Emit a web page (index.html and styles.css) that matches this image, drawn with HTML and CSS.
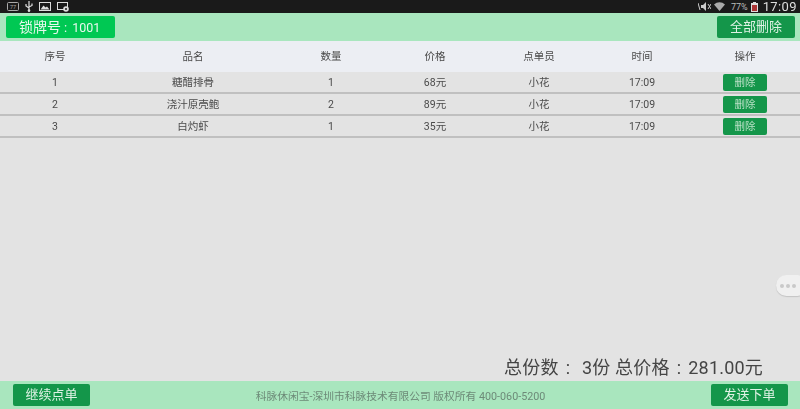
FILE: index.html
```html
<!DOCTYPE html>
<html lang="zh">
<head>
<meta charset="utf-8">
<title>锁牌号</title>
<link rel="stylesheet" href="styles.css">
</head>
<body>
<div class="app">
  <div class="status">
    <div class="status-left">
      <svg class="ic" width="12" height="9" viewBox="0 0 12 9"><rect x="0.5" y="0.5" width="11" height="8" rx="1" fill="none" stroke="#aaa"/><text x="6" y="7" font-size="5.5" fill="#aaa" text-anchor="middle" font-family="Roboto">77</text></svg>
      <svg class="ic" width="8" height="11" viewBox="0 0 8 11"><path d="M4 0v11M1 3v2l3 2M7 2.500v2l-3 1.500" fill="none" stroke="#ddd" stroke-width="1.200"/><circle cx="4" cy="9.500" r="1.300" fill="#ddd"/></svg>
      <svg class="ic" width="12" height="9" viewBox="0 0 12 9"><rect x="0.500" y="0.500" width="11" height="8" fill="none" stroke="#ddd"/><path d="M1.500 7.500l3-4 2 2 1.500-1 2.500 3z" fill="#ddd"/></svg>
      <svg class="ic" width="12" height="10" viewBox="0 0 12 10"><rect x="0.500" y="0.500" width="10" height="7" fill="none" stroke="#ddd"/><circle cx="9" cy="7" r="2.800" fill="#ddd"/><circle cx="9" cy="7" r="1" fill="#1a1a1a"/></svg>
    </div>
    <div class="status-right">
      <svg class="ic" width="13" height="9" viewBox="0 0 13 9"><path d="M3 3h2l3-3v9l-3-3H3z" fill="#ccc"/><path d="M0 1l2 7M10 2l3 5M13 2l-3 5" stroke="#ccc" fill="none"/></svg>
      <svg class="ic" width="11" height="9" viewBox="0 0 11 9"><path d="M0 2.500a8 8 0 0 1 11 0L5.500 9z" fill="#aaa"/></svg>
      <span class="pct">77%</span>
      <svg class="ic" width="7" height="10" viewBox="0 0 7 10"><rect x="0" y="1" width="7" height="9" fill="#ddd"/><rect x="2" y="0" width="3" height="1" fill="#ddd"/><rect x="1" y="3" width="5" height="6" fill="#a33"/></svg>
      <span class="clock">17:09</span>
    </div>
  </div>

  <header class="bar top-bar">
    <div class="lock-no">锁牌号<span class="lock-colon">:</span><span class="lock-num">1001</span></div>
    <button class="btn btn-large btn-clear">全部删除</button>
  </header>

  <main class="content">
    <div class="row head">
      <div>序号</div><div>品名</div><div>数量</div><div>价格</div><div>点单员</div><div>时间</div><div>操作</div>
    </div>
    <div class="row item">
      <div>1</div><div>糖醋排骨</div><div>1</div><div>68元</div><div>小花</div><div>17:09</div><div><button class="btn btn-small">删除</button></div>
    </div>
    <div class="row item">
      <div>2</div><div>浇汁原壳鲍</div><div>2</div><div>89元</div><div>小花</div><div>17:09</div><div><button class="btn btn-small">删除</button></div>
    </div>
    <div class="row item">
      <div>3</div><div>白灼虾</div><div>1</div><div>35元</div><div>小花</div><div>17:09</div><div><button class="btn btn-small">删除</button></div>
    </div>
    <div class="totals">总份数<span class="colon">:</span> 3份 总价格<span class="colon">:</span>281.00元</div>
    <div class="bubble"><i></i><i></i><i></i></div>
  </main>

  <footer class="bar bottom-bar">
    <button class="btn btn-large">继续点单</button>
    <div class="copyright">科脉休闲宝-深圳市科脉技术有限公司 版权所有 400-060-5200</div>
    <button class="btn btn-large">发送下单</button>
  </footer>
</div>
</body>
</html>
```

FILE: styles.css
```css
* { box-sizing: border-box; }
html, body { margin: 0; padding: 0; }
body {
  width: 800px;
  height: 409px;
  overflow: hidden;
  font-family: Roboto, "Noto Sans CJK SC", sans-serif;
  color: #444;
}
.app { display: flex; flex-direction: column; height: 409px; background: #e3e3e3; filter: blur(0.35px); }

.status {
  height: 13px;
  background: #1a1a1a;
  display: flex;
  justify-content: space-between;
  align-items: center;
  padding: 0 3px 0 7px;
  color: #ddd;
}
.status-left { display: flex; align-items: center; gap: 6px; }
.status-right { display: flex; align-items: center; gap: 3px; }
.ic { display: block; }
.pct { font-size: 9px; color: #bbb; margin-left: 3px; }
.clock { font-size: 13px; letter-spacing: 0.4px; margin-left: 2px; line-height: 13px; }

.bar {
  display: flex;
  align-items: center;
  justify-content: space-between;
  background: #a9e6be;
}
.top-bar { height: 28px; padding: 0 5px 0 6px; }
.bottom-bar { height: 28px; padding: 0 12px 0 13px; }

.colon { margin: 0 7px; }
.lock-colon { margin: 0 5px 0 3px; font-size: 13px; }
.lock-num { font-size: 12.500px; }
.lock-no {
  width: 109px;
  height: 22px;
  padding-left: 13px;
  background: #00c853;
  border-radius: 2px;
  color: #e8f8ee;
  font-size: 14px;
  line-height: 22px;
  white-space: nowrap;
}
.btn {
  border: 0;
  padding: 0;
  background: #14964a;
  border-radius: 2px;
  color: #dff2e5;
  font-family: inherit;
}
.btn-large { width: 77px; height: 22px; font-size: 13px; line-height: 22px; }
.btn-clear { width: 78px; }
.btn-small { width: 44px; height: 17px; font-size: 10.500px; line-height: 17px; display: block; margin: -1px auto 0; color: #b9e0c6; }

.content { flex: 1; position: relative; display: flex; flex-direction: column; }
.row {
  display: grid;
  grid-template-columns: 110px 166px 110px 98px 110px 96px 110px;
  align-items: center;
  text-align: center;
  font-size: 10.500px;
  line-height: 14px;
  color: #4a4a4a;
}
.head { height: 31px; padding-top: 1px; background: #eceef3; }
.item { height: 22px; padding-top: 2px; background: #e3e3e3; border-bottom: 2px solid #c0c0c0; }
.item:last-of-type { height: 21px; }

.totals {
  margin-top: auto;
  padding: 0 37px 1px 0;
  text-align: right;
  font-size: 18px;
  line-height: 24px;
  letter-spacing: 0.2px;
  white-space: nowrap;
  color: #444;
}
.bubble {
  position: absolute;
  top: 234px;
  right: -8px;
  width: 32px;
  height: 21px;
  border-radius: 11px;
  background: #f0f0f0;
  box-shadow: 0 1px 1px #c4c4c4;
  display: flex;
  align-items: center;
  gap: 2px;
  padding-left: 4px;
}
.bubble i { width: 4px; height: 4px; border-radius: 50%; background: #c9c9c9; }

.copyright { font-size: 10.750px; color: #6d8a78; }
```
